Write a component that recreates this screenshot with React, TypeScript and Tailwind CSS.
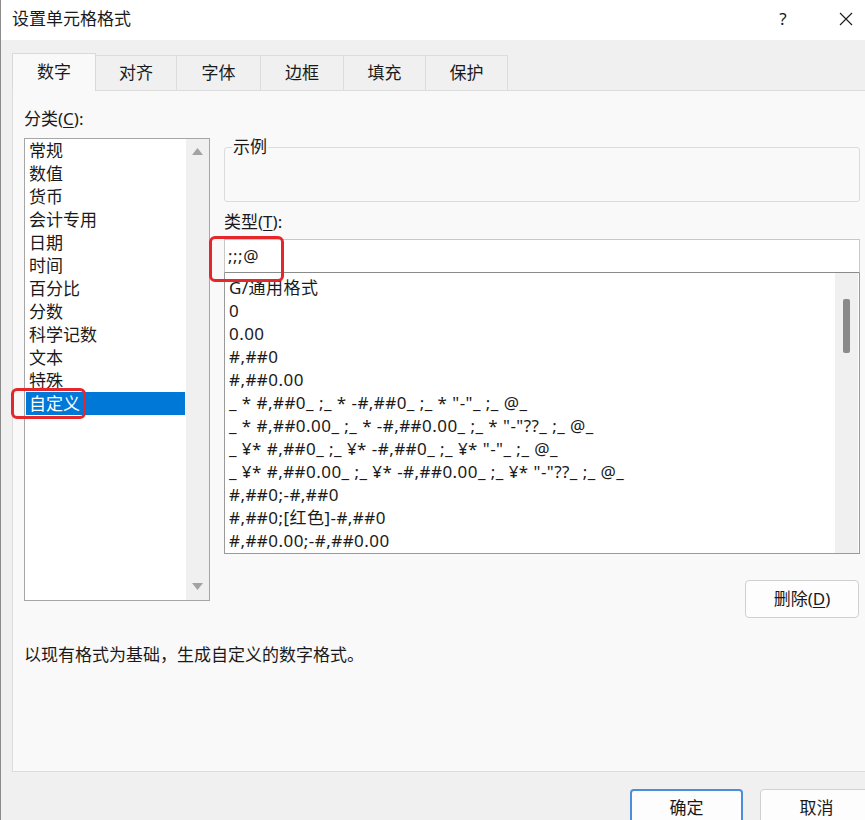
import React from 'react';

const cats = ['常规', '数值', '货币', '会计专用', '日期', '时间', '百分比', '分数', '科学记数', '文本', '特殊', '自定义'];
const formats = [
  'G/通用格式',
  '0',
  '0.00',
  '#,##0',
  '#,##0.00',
  '_ * #,##0_ ;_ * -#,##0_ ;_ * "-"_ ;_ @_',
  '_ * #,##0.00_ ;_ * -#,##0.00_ ;_ * "-"??_ ;_ @_',
  '_ ¥* #,##0_ ;_ ¥* -#,##0_ ;_ ¥* "-"_ ;_ @_',
  '_ ¥* #,##0.00_ ;_ ¥* -#,##0.00_ ;_ ¥* "-"??_ ;_ @_',
  '#,##0;-#,##0',
  '#,##0;[红色]-#,##0',
  '#,##0.00;-#,##0.00',
];
const tabs: [string, string][] = [
  ['数字', 'w-[84px]'],
  ['对齐', 'w-[81px]'],
  ['字体', 'w-[84px]'],
  ['边框', 'w-[83px]'],
  ['填充', 'w-[82px]'],
  ['保护', 'w-[82px]'],
];

export default function App() {
  return (
    <div className="w-[865px] h-[820px] overflow-hidden bg-[#f0f0f0] text-[#1a1a1a] text-[17px] font-['Noto_Sans','Noto_Sans_CJK_SC',sans-serif]">
      <div className="w-[885px] h-[820px] border-l border-[#8c8c8c]">
        {/* Title bar */}
        <div className="h-[40px] bg-white flex items-center pl-[11px]">
          <div className="leading-[22px] pb-[2px]">设置单元格格式</div>
          <div className="ml-auto w-[46px] text-center leading-[22px] pb-[2px]">?</div>
          <div className="w-[17px]" />
          <div className="w-[46px] flex justify-center items-center pb-[2px]">
            <svg width="14" height="14" viewBox="0 0 14 14">
              <path d="M1 1 L13 13 M13 1 L1 13" stroke="#1a1a1a" strokeWidth="1.1" fill="none" />
            </svg>
          </div>
          <div className="w-[16px]" />
        </div>

        {/* Body */}
        <div className="pl-[11px] pr-[12px] pt-[13px]">
          {/* Tabs */}
          <div className="flex items-end h-[37px]">
            {tabs.map(([t, w], i) =>
              i === 0 ? (
                <div
                  key={t}
                  className={`${w} h-[38px] -mb-px relative z-10 bg-[#f9f9f9] border border-b-0 border-[#d9d9d9] flex items-center justify-center leading-[22px] pb-[2px]`}
                >
                  {t}
                </div>
              ) : (
                <div
                  key={t}
                  className={`${w} h-[35px] bg-[#f0f0f0] border border-l-0 border-b-0 border-[#dcdcdc] flex items-center justify-center leading-[22px]`}
                >
                  {t}
                </div>
              )
            )}
          </div>

          {/* Panel */}
          <div className="h-[682px] border border-[#dcdcdc] bg-[#f9f9f9] pl-[11px] pt-[17px] pr-[12px]">
            <div className="flex gap-[14px]">
              {/* Left column */}
              <div className="w-[186px] shrink-0">
                <div className="h-[30px] leading-[22px]">
                  分类(<span className="underline underline-offset-2">C</span>):
                </div>
                <div className="relative h-[463px] border border-[#a6a6a6] bg-white flex">
                  <div className="flex-1 pl-[1px] pr-[1px]">
                    {cats.map((c) => (
                      <div
                        key={c}
                        className={
                          c === '自定义'
                            ? 'h-[23px] leading-[23px] pl-[3px] bg-[#0078d7] text-white'
                            : 'h-[23px] leading-[23px] pl-[3px]'
                        }
                      >
                        {c}
                      </div>
                    ))}
                  </div>
                  <div className="w-[23px] bg-[#f0f0f0] flex flex-col items-center justify-between pt-[9px] pb-[10px]">
                    <svg width="11" height="7" viewBox="0 0 11 7">
                      <path d="M5.5 0 L11 7 L0 7 Z" fill="#a3a3a3" />
                    </svg>
                    <svg width="11" height="7" viewBox="0 0 11 7">
                      <path d="M0 0 L11 0 L5.5 7 Z" fill="#a3a3a3" />
                    </svg>
                  </div>
                  <div className="absolute left-[-14px] top-[249px] w-[75px] h-[31px] border-[3px] border-[#e5262b] rounded-[6px]" />
                </div>
              </div>

              {/* Right column */}
              <div className="flex-1 flex flex-col">
                <fieldset className="mt-[29px] h-[65px] border border-[#dcdcdc] rounded-[3px]">
                  <legend className="ml-[7px] px-[1px] leading-[20px]">示例</legend>
                </fieldset>
                <div className="mt-[9px] leading-[22px]">
                  类型(<span className="underline underline-offset-2">T</span>):
                </div>
                <div className="relative mt-[6px] h-[34px] bg-white border border-[#c8c8c8] border-b-[#8a8a8a] pl-[3px] leading-[32px] tracking-[0.5px]">
                  ;;;@
                  <div className="absolute left-[-16px] top-[-4px] w-[75px] h-[46px] border-[3px] border-[#e5262b] rounded-[6px] z-10" />
                </div>
                <div className="h-[281px] bg-white border border-t-0 border-[#9a9a9a] flex overflow-hidden">
                  <div className="flex-1 pl-[4px] pt-[3px] overflow-hidden">
                    {formats.map((f) => (
                      <div key={f} className="h-[23px] leading-[23px] whitespace-pre tracking-[0.45px]">
                        {f}
                      </div>
                    ))}
                  </div>
                  <div className="w-[23px] bg-[#f0f0f0] flex justify-center pt-[26px] mr-[1px]">
                    <div className="w-[7px] h-[54px] bg-[#8a8a8a] rounded-[2px]" />
                  </div>
                </div>
                <div className="mt-[26px] self-end mr-[1px] w-[114px] h-[38px] rounded-[4px] border border-[#d0d0d0] bg-[#fdfdfd] flex items-center justify-center leading-[22px]">
                  删除(<span className="underline underline-offset-2">D</span>)
                </div>
              </div>
            </div>
            <div className="mt-[26px] leading-[22px]">以现有格式为基础，生成自定义的数字格式。</div>
          </div>

          {/* Bottom buttons */}
          <div className="mt-[17px] flex justify-end gap-[17px]">
            <div className="w-[113px] h-[38px] rounded-[4px] border-2 border-[#4a8fd8] bg-[#fdfdfd] flex items-center justify-center leading-[22px]">
              确定
            </div>
            <div className="w-[113px] h-[38px] rounded-[4px] border border-[#d0d0d0] bg-[#fdfdfd] flex items-center justify-center leading-[22px]">
              取消
            </div>
          </div>
        </div>
      </div>
    </div>
  );
}
